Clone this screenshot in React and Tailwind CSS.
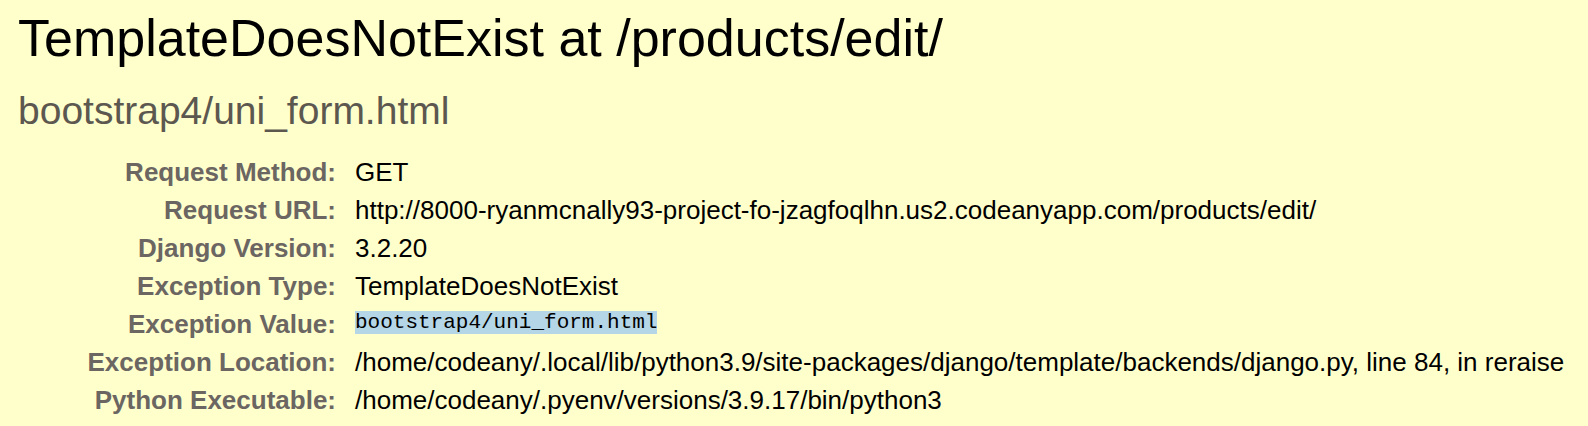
const rows = [
  ["Request Method:", "GET"],
  ["Request URL:", "http://8000-ryanmcnally93-project-fo-jzagfoqlhn.us2.codeanyapp.com/products/edit/"],
  ["Django Version:", "3.2.20"],
  ["Exception Type:", "TemplateDoesNotExist"],
  ["Exception Value:", "bootstrap4/uni_form.html", true],
  ["Exception Location:", "/home/codeany/.local/lib/python3.9/site-packages/django/template/backends/django.py, line 84, in reraise"],
  ["Python Executable:", "/home/codeany/.pyenv/versions/3.9.17/bin/python3"],
];

export default function App() {
  return (
    <main className="min-h-screen bg-[#ffffcc] px-[18px] pt-[10px] font-['Liberation_Sans',Arial,sans-serif] text-black">
      <h1 className="text-[52px] leading-[56px]">TemplateDoesNotExist at /products/edit/</h1>
      <p className="mt-[22px] text-[39px] leading-[46px] text-[#5c5850]">bootstrap4/uni_form.html</p>
      <table className="mt-[19px] border-collapse text-[26px] leading-[38px]">
        <tbody>
          {rows.map(([label, value, marked]) => (
            <tr key={label}>
              <th scope="row" className="w-[337px] min-w-[337px] p-0 pr-[19px] text-right align-top font-bold whitespace-nowrap text-[#6b6662]">{label}</th>
              <td className="p-0 align-top whitespace-nowrap">
                {marked ? (
                  <pre className="font-['Liberation_Mono','Courier_New',monospace] text-[21px] leading-[35px]"><mark className="bg-[#b4d6e7] text-black">{value}</mark></pre>
                ) : value}
              </td>
            </tr>
          ))}
        </tbody>
      </table>
    </main>
  );
}
